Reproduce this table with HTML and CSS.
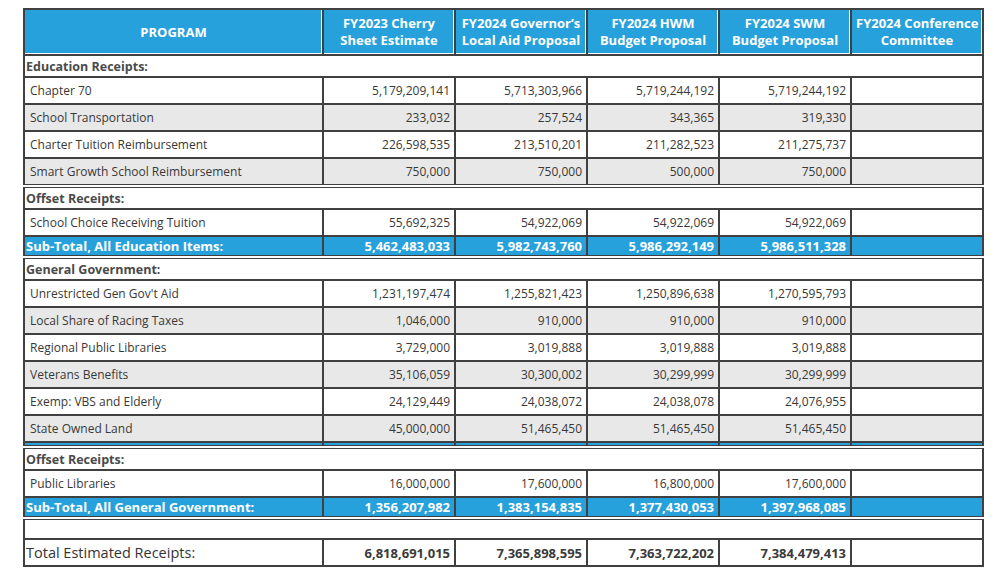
FILE: index.html
```html
<!DOCTYPE html>
<html lang="en">
<head>
<meta charset="utf-8">
<title>Local Aid Receipts</title>
<link rel="stylesheet" href="styles.css">
</head>
<body>
<div class="wrap">
<table class="aid">
  <colgroup>
    <col class="c-prog"><col class="c-num"><col class="c-num"><col class="c-num"><col class="c-num"><col class="c-num">
  </colgroup>
  <thead>
    <tr class="head">
      <th>PROGRAM</th>
      <th>FY2023 Cherry<br>Sheet Estimate</th>
      <th>FY2024 Governor’s<br>Local Aid Proposal</th>
      <th>FY2024 HWM<br>Budget Proposal</th>
      <th>FY2024 SWM<br>Budget Proposal</th>
      <th>FY2024 Conference<br>Committee</th>
    </tr>
  </thead>
  <tbody>
    <tr class="section"><td colspan="6">Education Receipts:</td></tr>
    <tr class="row"><td>Chapter 70</td><td>5,179,209,141</td><td>5,713,303,966</td><td>5,719,244,192</td><td>5,719,244,192</td><td></td></tr>
    <tr class="row alt"><td>School Transportation</td><td>233,032</td><td>257,524</td><td>343,365</td><td>319,330</td><td></td></tr>
    <tr class="row"><td>Charter Tuition Reimbursement</td><td>226,598,535</td><td>213,510,201</td><td>211,282,523</td><td>211,275,737</td><td></td></tr>
    <tr class="row alt"><td>Smart Growth School Reimbursement</td><td>750,000</td><td>750,000</td><td>500,000</td><td>750,000</td><td></td></tr>
    <tr class="section dbl"><td colspan="6">Offset Receipts:</td></tr>
    <tr class="row"><td>School Choice Receiving Tuition</td><td>55,692,325</td><td>54,922,069</td><td>54,922,069</td><td>54,922,069</td><td></td></tr>
    <tr class="subtotal"><td>Sub-Total, All Education Items:</td><td>5,462,483,033</td><td>5,982,743,760</td><td>5,986,292,149</td><td>5,986,511,328</td><td></td></tr>
    <tr class="section dbl"><td colspan="6">General Government:</td></tr>
    <tr class="row"><td>Unrestricted Gen Gov't Aid</td><td>1,231,197,474</td><td>1,255,821,423</td><td>1,250,896,638</td><td>1,270,595,793</td><td></td></tr>
    <tr class="row alt"><td>Local Share of Racing Taxes</td><td>1,046,000</td><td>910,000</td><td>910,000</td><td>910,000</td><td></td></tr>
    <tr class="row"><td>Regional Public Libraries</td><td>3,729,000</td><td>3,019,888</td><td>3,019,888</td><td>3,019,888</td><td></td></tr>
    <tr class="row alt"><td>Veterans Benefits</td><td>35,106,059</td><td>30,300,002</td><td>30,299,999</td><td>30,299,999</td><td></td></tr>
    <tr class="row"><td>Exemp: VBS and Elderly</td><td>24,129,449</td><td>24,038,072</td><td>24,038,078</td><td>24,076,955</td><td></td></tr>
    <tr class="row alt"><td>State Owned Land</td><td>45,000,000</td><td>51,465,450</td><td>51,465,450</td><td>51,465,450</td><td></td></tr>
    <tr class="strip"><td></td><td></td><td></td><td></td><td></td><td></td></tr>
    <tr class="section dbl"><td colspan="6">Offset Receipts:</td></tr>
    <tr class="row"><td>Public Libraries</td><td>16,000,000</td><td>17,600,000</td><td>16,800,000</td><td>17,600,000</td><td></td></tr>
    <tr class="subtotal"><td>Sub-Total, All General Government:</td><td>1,356,207,982</td><td>1,383,154,835</td><td>1,377,430,053</td><td>1,397,968,085</td><td></td></tr>
    <tr class="blank dbl"><td colspan="6"></td></tr>
    <tr class="total"><td>Total Estimated Receipts:</td><td>6,818,691,015</td><td>7,365,898,595</td><td>7,363,722,202</td><td>7,384,479,413</td><td></td></tr>
  </tbody>
</table>
</div>
</body>
</html>
```

FILE: styles.css
```css
html, body {
  margin: 0;
  padding: 0;
  background: #ffffff;
}

.wrap {
  padding: 8px 0 0 23px;
}

.aid {
  border-collapse: collapse;
  table-layout: fixed;
  width: 960px;
  font-family: "Open Sans", "Noto Sans", sans-serif;
  font-size: 12px;
  color: #383838;
}

.c-prog { width: 299px; }
.c-num { width: 132px; }

.aid td,
.aid th {
  border: 2px solid #404040;
  padding: 0 4px 0 4px;
  white-space: nowrap;
  overflow: hidden;
}

.head th {
  height: 44px;
  background: #27a1db;
  color: #ffffff;
  font-weight: 700;
  font-size: 13px;
  line-height: 17px;
  text-align: center;
  vertical-align: middle;
  box-shadow: inset -1px -1px 0 #ffffff;
}

.section td {
  height: 20px;
  padding: 0 1px;
  font-weight: 700;
  font-size: 12.5px;
  color: #4a4a4a;
  text-align: left;
}

.row td {
  height: 25px;
  text-align: right;
}

.row td:first-child {
  text-align: left;
  padding-left: 5px;
}

.row.alt td {
  background: #e8e8e8;
}

.subtotal td {
  height: 18px;
  background: #27a1db;
  color: #ffffff;
  font-weight: 700;
  font-size: 13px;
  text-align: right;
}

.subtotal td:first-child {
  text-align: left;
  padding-left: 1px;
}

.strip td {
  height: 2px;
  padding: 0;
  background: #27a1db;
  font-size: 0;
  line-height: 0;
}

.dbl td {
  border-top: 4px double #404040;
}

.blank td {
  height: 18px;
}

.total td {
  height: 25px;
  text-align: right;
  font-weight: 700;
  font-size: 13px;
  color: #3a3a3a;
}

.total td:first-child {
  text-align: left;
  padding-left: 1px;
  font-weight: 400;
  font-size: 14.5px;
  color: #333333;
}
```
